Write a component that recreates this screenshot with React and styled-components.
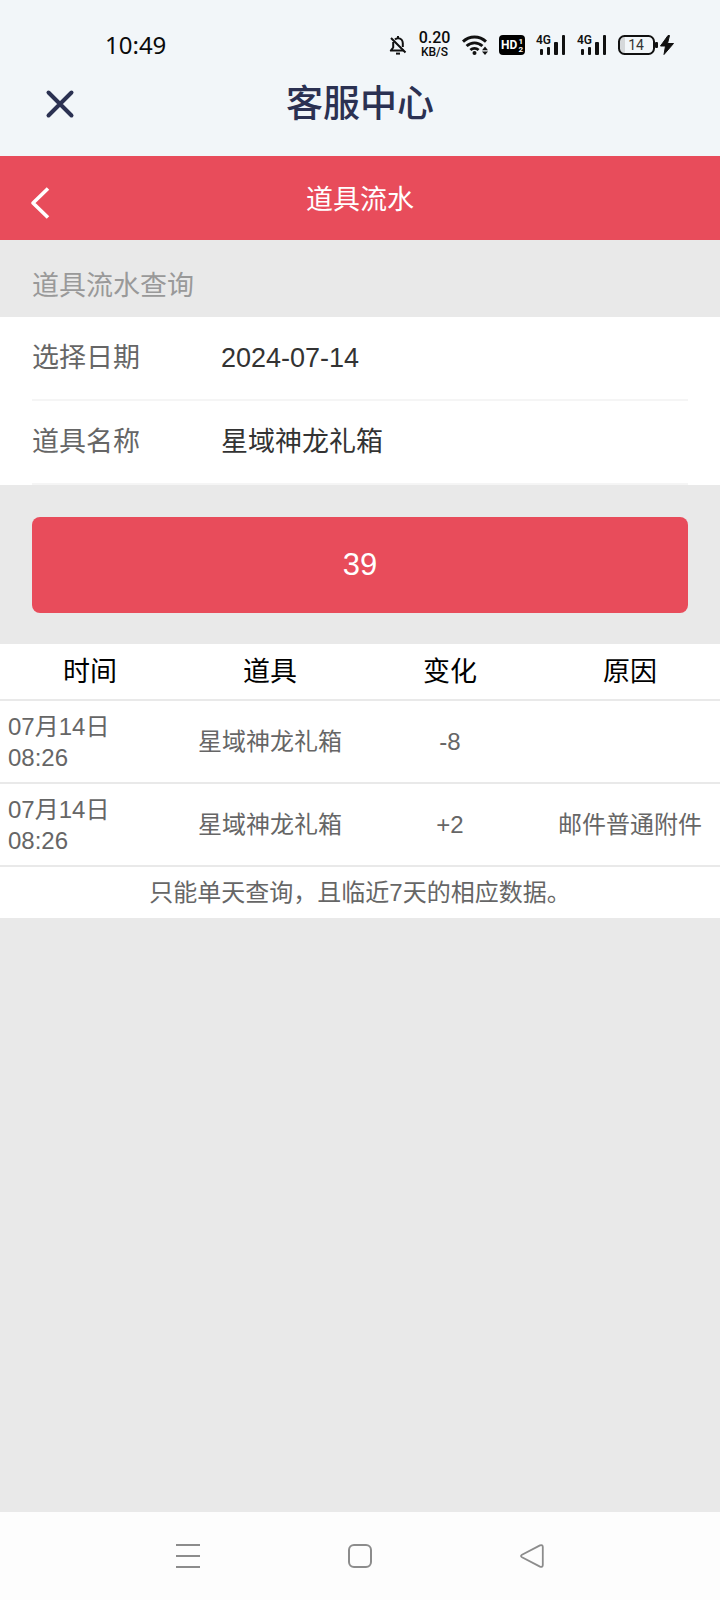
import React, { useState } from "react";
import styled, { createGlobalStyle } from "styled-components";

const RECORDS = [
  { day: "07月14日", time: "08:26", item: "星域神龙礼箱", change: "-8", reason: "" },
  { day: "07月14日", time: "08:26", item: "星域神龙礼箱", change: "+2", reason: "邮件普通附件" },
];

const COLUMNS = ["时间", "道具", "变化", "原因"];

/* ------------------- Styled Components ------------------- */
const GlobalStyle = createGlobalStyle`
  * {
    box-sizing: border-box;
  }

  body {
    margin: 0;
    background: #e9e9e9;
    font-family: "Liberation Sans", "Noto Sans CJK SC", sans-serif;
  }

  button, input, select {
    margin: 0;
    padding: 0;
    border: none;
    background: none;
    font-family: inherit;
  }

  svg {
    display: block;
    overflow: visible;
  }
`;

const Page = styled.div`
  min-height: 100vh;
  display: flex;
  flex-direction: column;
  background: #e9e9e9;
`;

const TopArea = styled.header`
  background: #f2f6f9;
  padding-bottom: 18px;
`;

const StatusBar = styled.div`
  height: 72px;
  padding: 18px 46px 0 105px;
  display: flex;
  align-items: center;
  justify-content: space-between;
  color: #0b0b0b;
`;

const Clock = styled.span`
  font-family: "Noto Sans", sans-serif;
  font-size: 24px;
  line-height: 32px;
`;

const StatusIcons = styled.div`
  display: flex;
  align-items: center;
  gap: 11px;
`;

const NetSpeed = styled.div`
  width: 33px;
  font-family: Roboto, sans-serif;
  font-weight: 500;
  font-size: ${(props) => (props.$small ? "12px" : "16px")};
  line-height: 14px;
  text-align: center;
`;

const TitleBar = styled.div`
  height: 66px;
  padding: 0 46px;
  display: grid;
  grid-template-columns: 1fr auto 1fr;
  justify-items: start;
  align-items: center;
`;

const PageTitle = styled.h1`
  margin: 0;
  font-size: 37px;
  line-height: 48px;
  font-weight: 500;
  color: #2b3152;
`;

const IconButton = styled.button`
  cursor: pointer;
`;

const RedBar = styled.div`
  height: 84px;
  padding: 4px 30px 0;
  display: grid;
  grid-template-columns: 1fr auto 1fr;
  justify-items: start;
  align-items: center;
  background: #e84c5b;
  color: #fff;
`;

const BarTitle = styled.h2`
  margin: 0;
  font-size: 27px;
  line-height: 40px;
  font-weight: 400;
`;

const SectionTitle = styled.h3`
  margin: 0;
  padding: 26px 32px 11px;
  font-size: 27px;
  line-height: 40px;
  font-weight: 400;
  color: #999;
`;

const Form = styled.form`
  margin: 0;
`;

const Fields = styled.div`
  padding: 0 32px;
  background: #fff;
`;

const Field = styled.div`
  height: 84px;
  display: flex;
  align-items: center;
  border-bottom: 2px solid #f5f5f5;

  label {
    width: 189px;
    font-size: 27px;
    line-height: 40px;
    color: #666;
  }

  input,
  select {
    flex: 1;
    min-width: 0;
    height: 40px;
    appearance: none;
    font-size: 27px;
    color: #333;
    outline: none;
  }
`;

const SubmitArea = styled.div`
  padding: 32px 32px 31px;
`;

const SubmitButton = styled.button`
  width: 100%;
  height: 96px;
  border-radius: 8px;
  background: #e84c5b;
  color: #fff;
  font-size: 31px;
`;

const Results = styled.section`
  background: #fff;
`;

const Table = styled.table`
  width: 100%;
  table-layout: fixed;
  border-collapse: collapse;

  th,
  td {
    padding: 0 8px;
    border-bottom: 2px solid #e9e9e9;
    text-align: center;
  }

  th {
    height: 56px;
    font-size: 27px;
    line-height: 40px;
    font-weight: 400;
    color: #000;
  }

  td {
    height: 83px;
    font-size: 24px;
    line-height: 31px;
    color: #666;
  }

  td:first-child {
    text-align: left;
  }
`;

const Note = styled.p`
  margin: 0;
  padding: 8px;
  font-size: 24px;
  line-height: 35px;
  text-align: center;
  color: #666;
`;

const NavBar = styled.nav`
  height: 88px;
  margin-top: auto;
  padding: 0 102px;
  display: grid;
  grid-template-columns: repeat(3, 1fr);
  justify-items: center;
  align-items: center;
  background: #fdfdfd;
`;

/* ------------------- Icons ------------------- */
const BellOffIcon = () => (
  <svg width="18" height="20" viewBox="0 0 18 20" fill="none" stroke="#111" strokeWidth="2">
    <path d="M6 4.5C6.8 3.6 7.8 3.2 9 3.2c3 0 4.8 2.2 4.8 5V12" />
    <path d="M4.2 7v5.5L1.8 15.6h13" strokeLinejoin="round" />
    <path d="M9 1v2M2 3l14.5 14.5" />
    <path d="M7 18.6h4" />
  </svg>
);

const WifiIcon = () => (
  <svg width="26" height="20" viewBox="0 0 26 20" fill="none" stroke="#111" strokeWidth="2.9">
    <path d="M1 6.6C7.5.4 17.5.4 24 6.6" />
    <path d="M4.6 11c4.6-4.2 11.2-4.2 15.8 0" />
    <path d="M8.4 15c2.4-2.2 5.8-2.2 8.2 0" />
    <circle cx="12.5" cy="18" r="2" fill="#111" stroke="none" />
    <path d="M20 15.2l3-3.6 3 3.6zM20 16.6l3 3.4 3-3.4z" fill="#111" stroke="none" />
  </svg>
);

const HdIcon = () => (
  <svg width="26" height="20" viewBox="0 0 26 20" fill="#fff" fontFamily="Roboto, sans-serif" fontWeight="700">
    <rect width="26" height="20" rx="4" fill="#000" />
    <text x="2" y="14.4" fontSize="12">HD</text>
    <text x="19.5" y="9" fontSize="8">1</text>
    <text x="19.5" y="17" fontSize="8">2</text>
  </svg>
);

const SignalIcon = () => (
  <svg width="30" height="20" viewBox="0 0 30 20" fill="#111">
    <text x="0" y="9.4" fontSize="12" fontFamily="Roboto, sans-serif" fontWeight="600">4G</text>
    <rect x="4" y="14" width="3" height="6" rx="1" />
    <rect x="11" y="12" width="3" height="8" rx="1" />
    <rect x="18" y="7" width="4" height="13" rx="1" />
    <rect x="26" y="0" width="3" height="20" rx="1" />
  </svg>
);

const BatteryIcon = () => (
  <svg width="56" height="20" viewBox="0 0 56 20" fill="#111">
    <path d="M6 2h1v16H6a4 4 0 0 1-4-4V6a4 4 0 0 1 4-4z" fill="#d5d8da" />
    <rect x="1" y="1" width="35" height="18" rx="5.5" fill="none" stroke="#111" strokeWidth="2" />
    <rect x="37" y="7" width="3" height="6" rx="1" />
    <text x="18" y="15" fontSize="14" textAnchor="middle" fontFamily="Roboto, sans-serif" fill="#333">14</text>
    <path d="M50 0.5L42.5 11h5L46 19.5 55.5 8.5h-6L51.5 0.5z" stroke="#111" />
  </svg>
);

const CloseIcon = () => (
  <svg width="28" height="28" viewBox="0 0 28 28" fill="none" stroke="#2b3152" strokeWidth="4" strokeLinecap="round">
    <path d="M2.5 1.5l23 23M25.5 1.5l-23 23" />
  </svg>
);

const BackIcon = () => (
  <svg width="18" height="40" viewBox="0 0 18 40" fill="none" stroke="#fff" strokeWidth="3.6" strokeLinejoin="round">
    <path d="M18 8.5L3 23l15 14.5" />
  </svg>
);

const MenuIcon = () => (
  <svg width="24" height="24" viewBox="0 0 24 24" stroke="#8c8c8c" strokeWidth="2">
    <path d="M0 1h24M0 12h24M0 23h24" />
  </svg>
);

const HomeIcon = () => (
  <svg width="24" height="24" viewBox="0 0 24 24" fill="none" stroke="#8c8c8c" strokeWidth="2">
    <rect x="1" y="1" width="22" height="22" rx="5" />
  </svg>
);

const ReturnIcon = () => (
  <svg width="24" height="24" viewBox="0 0 24 24" fill="none" stroke="#8c8c8c" strokeWidth="1.8" strokeLinejoin="round">
    <path d="M2 10.8L20 1.4Q22.8.5 22.8 3v18q0 2.5-2.8 1.6L2 13.2Q0 12 2 10.8z" />
  </svg>
);

/* ------------------- Component ------------------- */
const App = () => {
  const [date, setDate] = useState("2024-07-14");
  const [item, setItem] = useState("星域神龙礼箱");

  return (
    <Page>
      <GlobalStyle />
      <TopArea>
        <StatusBar>
          <Clock>10:49</Clock>
          <StatusIcons>
            <BellOffIcon />
            <div>
              <NetSpeed>0.20</NetSpeed>
              <NetSpeed $small>KB/S</NetSpeed>
            </div>
            <WifiIcon />
            <HdIcon />
            <SignalIcon />
            <SignalIcon />
            <BatteryIcon />
          </StatusIcons>
        </StatusBar>
        <TitleBar>
          <IconButton type="button" aria-label="关闭">
            <CloseIcon />
          </IconButton>
          <PageTitle>客服中心</PageTitle>
        </TitleBar>
      </TopArea>

      <RedBar>
        <IconButton type="button" aria-label="返回">
          <BackIcon />
        </IconButton>
        <BarTitle>道具流水</BarTitle>
      </RedBar>

      {/* -------- Query form -------- */}
      <SectionTitle>道具流水查询</SectionTitle>
      <Form onSubmit={(e) => e.preventDefault()}>
        <Fields>
          <Field>
            <label htmlFor="date">选择日期</label>
            <input id="date" type="text" value={date} onChange={(e) => setDate(e.target.value)} />
          </Field>
          <Field>
            <label htmlFor="item">道具名称</label>
            <select id="item" value={item} onChange={(e) => setItem(e.target.value)}>
              <option value="星域神龙礼箱">星域神龙礼箱</option>
            </select>
          </Field>
        </Fields>
        <SubmitArea>
          <SubmitButton type="submit">39</SubmitButton>
        </SubmitArea>
      </Form>

      {/* -------- Results -------- */}
      <Results>
        <Table>
          <thead>
            <tr>
              {COLUMNS.map((name) => (
                <th key={name} scope="col">{name}</th>
              ))}
            </tr>
          </thead>
          <tbody>
            {RECORDS.map((record, index) => (
              <tr key={index}>
                <td>
                  {record.day}
                  <br />
                  {record.time}
                </td>
                <td>{record.item}</td>
                <td>{record.change}</td>
                <td>{record.reason}</td>
              </tr>
            ))}
          </tbody>
        </Table>
        <Note>只能单天查询，且临近7天的相应数据。</Note>
      </Results>

      <NavBar>
        <IconButton type="button" aria-label="最近任务">
          <MenuIcon />
        </IconButton>
        <IconButton type="button" aria-label="主屏幕">
          <HomeIcon />
        </IconButton>
        <IconButton type="button" aria-label="后退">
          <ReturnIcon />
        </IconButton>
      </NavBar>
    </Page>
  );
};

export default App;
